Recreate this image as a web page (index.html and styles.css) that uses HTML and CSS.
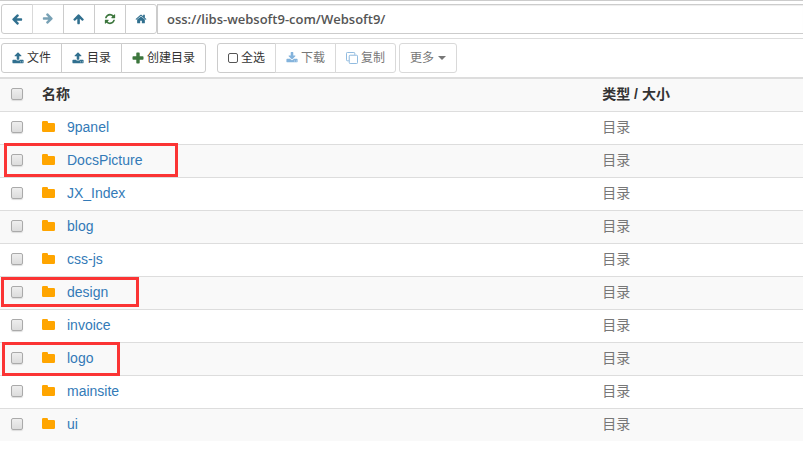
FILE: index.html
```html
<!DOCTYPE html>
<html lang="zh-CN">
<head>
<meta charset="utf-8">
<title>oss://libs-websoft9-com/Websoft9/</title>
<link rel="stylesheet" href="styles.css">
</head>
<body>
<svg class="sprite" aria-hidden="true">
  <symbol id="arrow" viewBox="0 0 1792 1792"><path d="M1664 896v128q0 53-32.5 90.5t-84.5 37.5h-704l293 294q38 36 38 90t-38 90l-75 76q-37 37-90 37-52 0-91-37l-651-652q-37-37-37-90 0-52 37-91l651-650q38-38 91-38 52 0 90 38l75 74q38 38 38 91t-38 91l-293 293h704q52 0 84.5 37.5t32.5 90.5z"/></symbol>
  <symbol id="refresh" viewBox="0 0 1792 1792"><path d="M1639 1056q0 5-1 7-64 268-268 434.5t-478 166.5q-146 0-282.5-55t-243.5-157l-129 129q-19 19-45 19t-45-19-19-45v-448q0-26 19-45t45-19h448q26 0 45 19t19 45-19 45l-137 137q71 66 161 102t187 36q134 0 250-65t186-179q11-17 53-117 8-23 30-23h192q13 0 22.5 9.5t9.5 22.5zm25-800v448q0 26-19 45t-45 19h-448q-26 0-45-19t-19-45 19-45l138-138q-148-137-349-137-134 0-250 65t-186 179q-11 17-53 117-8 23-30 23h-199q-13 0-22.5-9.5t-9.5-22.5v-7q65-268 270-434.5t480-166.5q146 0 284 55.5t245 156.5l130-129q19-19 45-19t45 19 19 45z"/></symbol>
  <symbol id="home" viewBox="0 0 1792 1792"><path d="M1472 992v480q0 26-19 45t-45 19h-384v-384h-256v384h-384q-26 0-45-19t-19-45v-480q0-1 .5-3t.5-3l575-474 575 474q1 2 1 6zm223-69l-62 74q-8 9-21 11h-3q-13 0-21-7l-692-577-692 577q-12 8-24 7-13-2-21-11l-62-74q-8-10-7-23.5t11-21.5l719-599q32-26 76-26t76 26l244 204v-195q0-14 9-23t23-9h192q14 0 23 9t9 23v408l219 182q10 8 11 21.5t-7 23.5z"/></symbol>
  <symbol id="upload" viewBox="0 0 1792 1792"><path d="M1344 1472q0-26-19-45t-45-19-45 19-19 45 19 45 45 19 45-19 19-45zm256 0q0-26-19-45t-45-19-45 19-19 45 19 45 45 19 45-19 19-45zm128-224v320q0 40-28 68t-68 28h-1472q-40 0-68-28t-28-68v-320q0-40 28-68t68-28h427q21 56 70.5 92t110.5 36h256q61 0 110.5-36t70.5-92h427q40 0 68 28t28 68zm-325-648q-17 40-59 40h-256v448q0 26-19 45t-45 19h-256q-26 0-45-19t-19-45v-448h-256q-42 0-59-40-17-39 14-69l448-448q18-19 45-19t45 19l448 448q31 30 14 69z"/></symbol>
  <symbol id="download" viewBox="0 0 1792 1792"><path d="M1344 1344q0-26-19-45t-45-19-45 19-19 45 19 45 45 19 45-19 19-45zm256 0q0-26-19-45t-45-19-45 19-19 45 19 45 45 19 45-19 19-45zm128-224v320q0 40-28 68t-68 28h-1472q-40 0-68-28t-28-68v-320q0-40 28-68t68-28h465l135 136q58 56 136 56t136-56l136-136h464q40 0 68 28t28 68zm-325-569q17 41-14 70l-448 448q-18 19-45 19t-45-19l-448-448q-31-29-14-70 17-39 59-39h256v-448q0-26 19-45t45-19h256q26 0 45 19t19 45v448h256q42 0 59 39z"/></symbol>
  <symbol id="plus" viewBox="0 0 12 12"><path d="M5 .5h2q.7 0 .7.7v3.100h3.100q.7 0 .7.7v2q0 .7-.7.7H7.700v3.100q0 .7-.7.7H5q-.7 0-.7-.7V7.700H1.200q-.7 0-.7-.7V5q0-.7.7-.7h3.100V1.200q0-.7.7-.7z"/></symbol>
  <symbol id="square" viewBox="0 0 10 12"><rect x=".5" y="1.500" width="9" height="9" rx="1.500" fill="none" stroke="currentColor"/></symbol>
  <symbol id="clone" viewBox="0 0 13 13"><path d="M4.500 3.500h7q1 0 1 1v7q0 1-1 1h-7q-1 0-1-1v-7q0-1 1-1zM3 9.500H1.500q-1 0-1-1v-7q0-1 1-1h7q1 0 1 1V3" fill="none" stroke="currentColor"/></symbol>
  <symbol id="folder" viewBox="0 0 13 11"><path d="M0 1.200Q0 0 1.200 0h3.600Q6 0 6 1.200V2h5.800Q13 2 13 3.200v6.600q0 1.200-1.200 1.200H1.200Q0 11 0 9.800z"/></symbol>
</svg>

<nav class="path-bar">
  <div class="group">
    <button class="btn nav" aria-label="后退"><svg class="icon"><use href="#arrow"/></svg></button>
    <button class="btn nav" aria-label="前进" disabled><svg class="icon flip"><use href="#arrow"/></svg></button>
    <button class="btn nav" aria-label="上级目录"><svg class="icon up"><use href="#arrow"/></svg></button>
    <button class="btn nav" aria-label="刷新"><svg class="icon green"><use href="#refresh"/></svg></button>
    <button class="btn nav" aria-label="首页"><svg class="icon"><use href="#home"/></svg></button>
  </div>
  <input class="path" type="text" aria-label="路径" value="oss://libs-websoft9-com/Websoft9/">
</nav>

<div class="toolbar">
  <div class="group">
    <button class="btn"><svg class="icon"><use href="#upload"/></svg>文件</button>
    <button class="btn"><svg class="icon"><use href="#upload"/></svg>目录</button>
    <button class="btn"><svg class="icon green"><use href="#plus"/></svg>创建目录</button>
  </div>
  <div class="actions">
    <div class="group">
      <button class="btn"><svg class="icon box"><use href="#square"/></svg>全选</button>
      <button class="btn" disabled><svg class="icon blue"><use href="#download"/></svg>下载</button>
      <button class="btn" disabled><svg class="icon blue"><use href="#clone"/></svg>复制</button>
    </div>
    <div class="group">
      <button class="btn" disabled>更多<span class="caret"></span></button>
    </div>
  </div>
</div>

<table class="files">
  <colgroup><col class="col-check"><col><col class="col-type"></colgroup>
  <thead>
    <tr><th><input type="checkbox" aria-label="全选"></th><th>名称</th><th>类型 / 大小</th></tr>
  </thead>
  <tbody>
    <tr><td><input type="checkbox" aria-label="9panel"></td><td><svg class="folder"><use href="#folder"/></svg><a href="#">9panel</a></td><td>目录</td></tr>
    <tr><td><input type="checkbox" aria-label="DocsPicture"><span class="mark mark-docs"></span></td><td><svg class="folder"><use href="#folder"/></svg><a href="#">DocsPicture</a></td><td>目录</td></tr>
    <tr><td><input type="checkbox" aria-label="JX_Index"></td><td><svg class="folder"><use href="#folder"/></svg><a href="#">JX_Index</a></td><td>目录</td></tr>
    <tr><td><input type="checkbox" aria-label="blog"></td><td><svg class="folder"><use href="#folder"/></svg><a href="#">blog</a></td><td>目录</td></tr>
    <tr><td><input type="checkbox" aria-label="css-js"></td><td><svg class="folder"><use href="#folder"/></svg><a href="#">css-js</a></td><td>目录</td></tr>
    <tr><td><input type="checkbox" aria-label="design"><span class="mark mark-design"></span></td><td><svg class="folder"><use href="#folder"/></svg><a href="#">design</a></td><td>目录</td></tr>
    <tr><td><input type="checkbox" aria-label="invoice"></td><td><svg class="folder"><use href="#folder"/></svg><a href="#">invoice</a></td><td>目录</td></tr>
    <tr><td><input type="checkbox" aria-label="logo"><span class="mark mark-logo"></span></td><td><svg class="folder"><use href="#folder"/></svg><a href="#">logo</a></td><td>目录</td></tr>
    <tr><td><input type="checkbox" aria-label="mainsite"></td><td><svg class="folder"><use href="#folder"/></svg><a href="#">mainsite</a></td><td>目录</td></tr>
    <tr><td><input type="checkbox" aria-label="ui"></td><td><svg class="folder"><use href="#folder"/></svg><a href="#">ui</a></td><td>目录</td></tr>
  </tbody>
</table>
</body>
</html>
```
FILE: styles.css
```css
* { box-sizing: border-box; }

body {
  margin: 0;
  background: #fff;
  color: #333;
  font: 14px/20px "Liberation Sans", "Noto Sans CJK SC", sans-serif;
}

.sprite {
  position: absolute;
  width: 0;
  height: 0;
}

.path-bar {
  display: flex;
  padding: 3px 0 4px 1px;
  border-top: 1px solid #ccc;
  border-bottom: 1px solid #ddd;
}

.toolbar {
  display: flex;
  gap: 11px;
  padding: 4px 1px;
}

.actions {
  display: flex;
  gap: 3px;
}

.group { display: flex; }

.btn {
  display: flex;
  align-items: center;
  justify-content: center;
  gap: 3px;
  height: 30px;
  margin: 0;
  padding: 0 10px;
  border: 1px solid #ccc;
  background: #fff;
  color: #333;
  font: 12px/18px "Liberation Sans", "Noto Sans CJK SC", sans-serif;
  white-space: nowrap;
}

.btn + .btn { margin-left: -1px; }
.btn:first-child { border-radius: 3px 0 0 3px; }
.btn:last-child { border-radius: 0 3px 3px 0; }
.btn:only-child { border-radius: 3px; }
.btn:disabled { color: #777; border-color: #d9d9d9; }
.btn:disabled .icon { opacity: .65; }
.nav { width: 32px; padding: 0; }

.icon {
  width: 12px;
  height: 12px;
  flex: none;
  color: #31708f;
  fill: currentColor;
}

.flip { transform: rotate(180deg); }
.up { transform: rotate(90deg); }
.green { color: #3c763d; }
.box { width: 10px; color: #555; }
.blue { color: #428bca; }

.caret {
  margin-left: 1px;
  border: 4px solid transparent;
  border-top-color: currentColor;
  border-bottom: 0;
}

.path {
  flex: 1;
  min-width: 0;
  height: 30px;
  padding: 0 9px;
  border: 1px solid #ccc;
  border-right: 0;
  box-shadow: inset 0 1px 1px rgba(0, 0, 0, .075);
  color: #555;
  font: 600 13px/18px "Open Sans", "Noto Sans", sans-serif;
}

.files {
  width: 100%;
  border-collapse: separate;
  border-spacing: 0;
  border-top: 1px solid #ddd;
  table-layout: fixed;
}

.col-check { width: 34px; }
.col-type { width: 26%; }

.files th,
.files td {
  height: 33px;
  padding: 5px 8px 7px;
  border-top: 1px solid #ddd;
  text-align: left;
  vertical-align: middle;
}

.files th:first-child,
.files td:first-child {
  position: relative;
  padding: 0 0 2px 11px;
}

.files thead tr,
.files tbody tr:nth-child(even) { background: #f9f9f9; }
.files td { color: #777; }

.files input {
  display: block;
  appearance: none;
  width: 12px;
  height: 12px;
  margin: 0;
  border: 1px solid #aaa;
  border-radius: 2px;
  background: linear-gradient(#eee, #dcdcdc);
  box-shadow: 0 1px 1px #ddd;
}

.files a {
  color: #337ab7;
  text-decoration: none;
}

.folder {
  width: 13px;
  height: 11px;
  margin-right: 12px;
  fill: orange;
}

.mark {
  position: absolute;
  z-index: 1;
  border: 3px solid #fb3434;
  pointer-events: none;
}

.mark-docs { top: -2px; left: 4px; width: 174px; height: 34px; }
.mark-design { top: 0; left: 1px; width: 138px; height: 30px; }
.mark-logo { top: -1px; left: 2px; width: 118px; height: 34px; }
```
